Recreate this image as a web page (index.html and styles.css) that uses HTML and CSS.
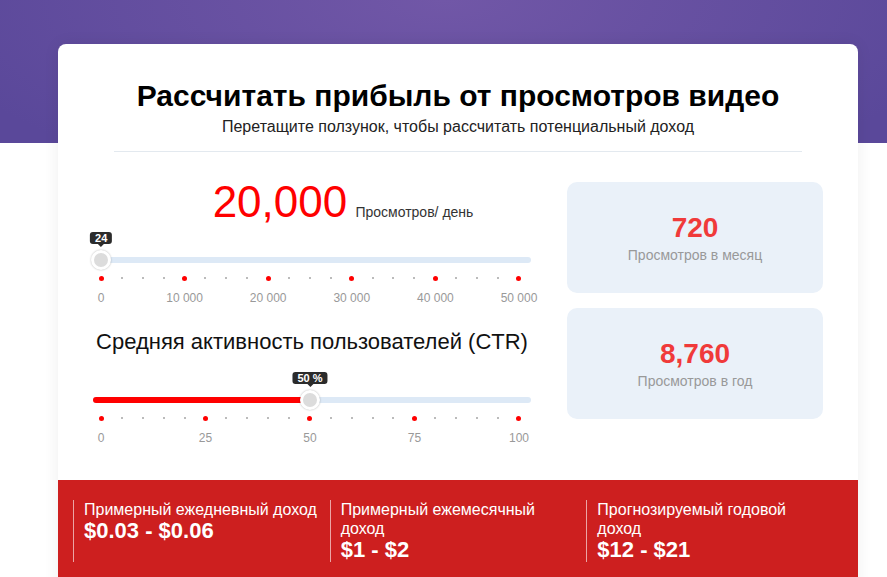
FILE: index.html
```html
<!DOCTYPE html>
<html>

<head>
    <meta charset="utf-8">
    <title>Калькулятор дохода от просмотров</title>
    <link rel="stylesheet" href="styles.css">
</head>

<body>
    <div class="hero"></div>

    <div class="calc">
        <div class="calc-header">
            <h1>Рассчитать прибыль от просмотров видео</h1>
            <p class="subtitle">Перетащите ползунок, чтобы рассчитать потенциальный доход</p>
        </div>

        <div class="calc-body">
            <div class="controls">
                <div class="views">
                    <span class="views-num">20,000</span>
                    <span class="views-unit">Просмотров/ день</span>
                </div>

                <!-- views slider -->
                <div class="slider">
                    <div class="track"></div>
                    <div class="thumb" style="left: calc(8px + (100% - 20px) * 0.0005);">
                        <span class="tip">24</span>
                    </div>
                </div>
                <div class="ticks">
                    <span class="tick major"></span><span class="tick"></span><span class="tick"></span><span class="tick"></span>
                    <span class="tick major"></span><span class="tick"></span><span class="tick"></span><span class="tick"></span>
                    <span class="tick major"></span><span class="tick"></span><span class="tick"></span><span class="tick"></span>
                    <span class="tick major"></span><span class="tick"></span><span class="tick"></span><span class="tick"></span>
                    <span class="tick major"></span><span class="tick"></span><span class="tick"></span><span class="tick"></span>
                    <span class="tick major"></span>
                </div>
                <div class="labels">
                    <span>0</span><span>10 000</span><span>20 000</span><span>30 000</span><span>40 000</span><span>50 000</span>
                </div>

                <h2>Средняя активность пользователей (CTR)</h2>

                <!-- ctr slider -->
                <div class="slider">
                    <div class="track"></div>
                    <div class="fill" style="width: calc(8px + (100% - 20px) * 0.5);"></div>
                    <div class="thumb" style="left: calc(8px + (100% - 20px) * 0.5);">
                        <span class="tip">50 %</span>
                    </div>
                </div>
                <div class="ticks">
                    <span class="tick major"></span><span class="tick"></span><span class="tick"></span><span class="tick"></span><span class="tick"></span>
                    <span class="tick major"></span><span class="tick"></span><span class="tick"></span><span class="tick"></span><span class="tick"></span>
                    <span class="tick major"></span><span class="tick"></span><span class="tick"></span><span class="tick"></span><span class="tick"></span>
                    <span class="tick major"></span><span class="tick"></span><span class="tick"></span><span class="tick"></span><span class="tick"></span>
                    <span class="tick major"></span>
                </div>
                <div class="labels">
                    <span>0</span><span>25</span><span>50</span><span>75</span><span>100</span>
                </div>
            </div>

            <div class="stats">
                <div class="stat">
                    <div class="stat-num">720</div>
                    <div class="stat-label">Просмотров в месяц</div>
                </div>
                <div class="stat">
                    <div class="stat-num">8,760</div>
                    <div class="stat-label">Просмотров в год</div>
                </div>
            </div>
        </div>

        <div class="income">
            <div class="income-item">
                <div class="income-title">Примерный ежедневный доход</div>
                <div class="income-value">$0.03 - $0.06</div>
            </div>
            <div class="income-item">
                <div class="income-title">Примерный ежемесячный доход</div>
                <div class="income-value">$1 - $2</div>
            </div>
            <div class="income-item">
                <div class="income-title">Прогнозируемый годовой доход</div>
                <div class="income-value">$12 - $21</div>
            </div>
        </div>
    </div>
</body>

</html>
```

FILE: styles.css
```css
body {
    margin: 0;
    font-family: 'Liberation Sans', Arial, sans-serif;
    background-color: #fff;
    color: #222;
}

/* Purple header band */
.hero {
    height: 143px;
    background: radial-gradient(ellipse 60% 140% at 50% 0%, #7157a7 0%, #5a489a 100%);
    margin-bottom: -99px;
}

/* Calculator card */
.calc {
    position: relative;
    width: 800px;
    margin-left: 58px;
    background: #fff;
    border-radius: 8px 8px 0 0;
    box-shadow: 0 0 16px rgba(0, 0, 0, 0.07);
}

.calc-header {
    padding: 34px 56px 0;
    text-align: center;
}

h1 {
    margin: 0;
    font-size: 30px;
    line-height: 36px;
    font-weight: bold;
    color: #000;
}

.subtitle {
    margin: 3px 0 0;
    padding-bottom: 14px;
    font-size: 16px;
    line-height: 20px;
    color: #222;
    border-bottom: 1px solid #e3e9ef;
}

.calc-body {
    display: grid;
    grid-template-columns: 1fr 256px;
    gap: 36px;
    padding: 26px 35px 35px;
}

/* Left side: sliders */
.views {
    height: 48px;
    padding-left: 62px;
    text-align: center;
    font-size: 44px;
    line-height: 48px;
}

.views-num {
    color: #ff0000;
}

.views-unit {
    margin-left: -4px;
    font-size: 14px;
    line-height: 14px;
    color: #333;
}

.slider {
    position: relative;
    height: 20px;
    margin-top: 24px;
}

.track,
.fill {
    position: absolute;
    left: 0;
    top: 7px;
    height: 6px;
    border-radius: 3px;
}

.track {
    right: 0;
    background: #dde9f6;
}

.fill {
    background: #ff0000;
}

.thumb {
    position: absolute;
    top: 0;
    width: 20px;
    height: 20px;
    box-sizing: border-box;
    margin-left: -10px;
    border-radius: 50%;
    background: #dcdcdc;
    border: 3px solid #fff;
    box-shadow: 0 0 2px rgba(0, 0, 0, 0.3);
}

.tip {
    position: absolute;
    bottom: 23px;
    left: 50%;
    transform: translateX(-50%);
    padding: 0 5px;
    font-size: 11px;
    line-height: 12px;
    font-weight: bold;
    color: #fff;
    background: #2b2b2b;
    border-radius: 3px;
    white-space: nowrap;
}

.tip::after {
    content: "";
    position: absolute;
    left: 50%;
    top: 100%;
    margin-left: -3px;
    border: 3px solid transparent;
    border-top-color: #2b2b2b;
}

.ticks,
.labels {
    display: flex;
    justify-content: space-between;
    margin: 0 12px 0 8px;
}

.ticks {
    align-items: center;
    height: 4px;
    margin-top: 6px;
}

.tick {
    display: flex;
    justify-content: center;
    width: 0;
}

.tick::before {
    content: "";
    flex: none;
    width: 2px;
    height: 2px;
    background: #bbb;
}

.tick.major::before {
    width: 5px;
    height: 5px;
    border-radius: 50%;
    background: #ff0000;
}

.labels {
    margin-top: 11px;
    font-size: 12px;
    line-height: 14px;
    color: #999;
}

.labels span {
    display: flex;
    justify-content: center;
    width: 0;
    white-space: nowrap;
}

h2 {
    margin: 24px 0 0;
    font-size: 22px;
    line-height: 26px;
    font-weight: normal;
    text-align: center;
    color: #111;
}

h2 + .slider {
    margin-top: 35px;
}

/* Right side: view stats */
.stats {
    display: flex;
    flex-direction: column;
    gap: 15px;
    margin-top: 4px;
}

.stat {
    display: flex;
    flex-direction: column;
    justify-content: center;
    align-items: center;
    height: 111px;
    background: #eaf1f9;
    border-radius: 10px;
}

.stat-num {
    font-size: 28px;
    line-height: 32px;
    font-weight: bold;
    color: #f03a3a;
}

.stat-label {
    margin-top: 2px;
    font-size: 14px;
    line-height: 18px;
    color: #999;
}

/* Red income band */
.income {
    display: grid;
    grid-template-columns: repeat(3, 1fr);
    padding: 20px 15px 30px;
    background: #cd1f1f;
    color: #fff;
}

.income-item {
    padding: 0 12px 0 10px;
    border-left: 1px solid rgba(255, 255, 255, 0.6);
}

.income-title {
    font-size: 16px;
    line-height: 19px;
}

.income-value {
    font-size: 22px;
    line-height: 24px;
    font-weight: bold;
}
```
